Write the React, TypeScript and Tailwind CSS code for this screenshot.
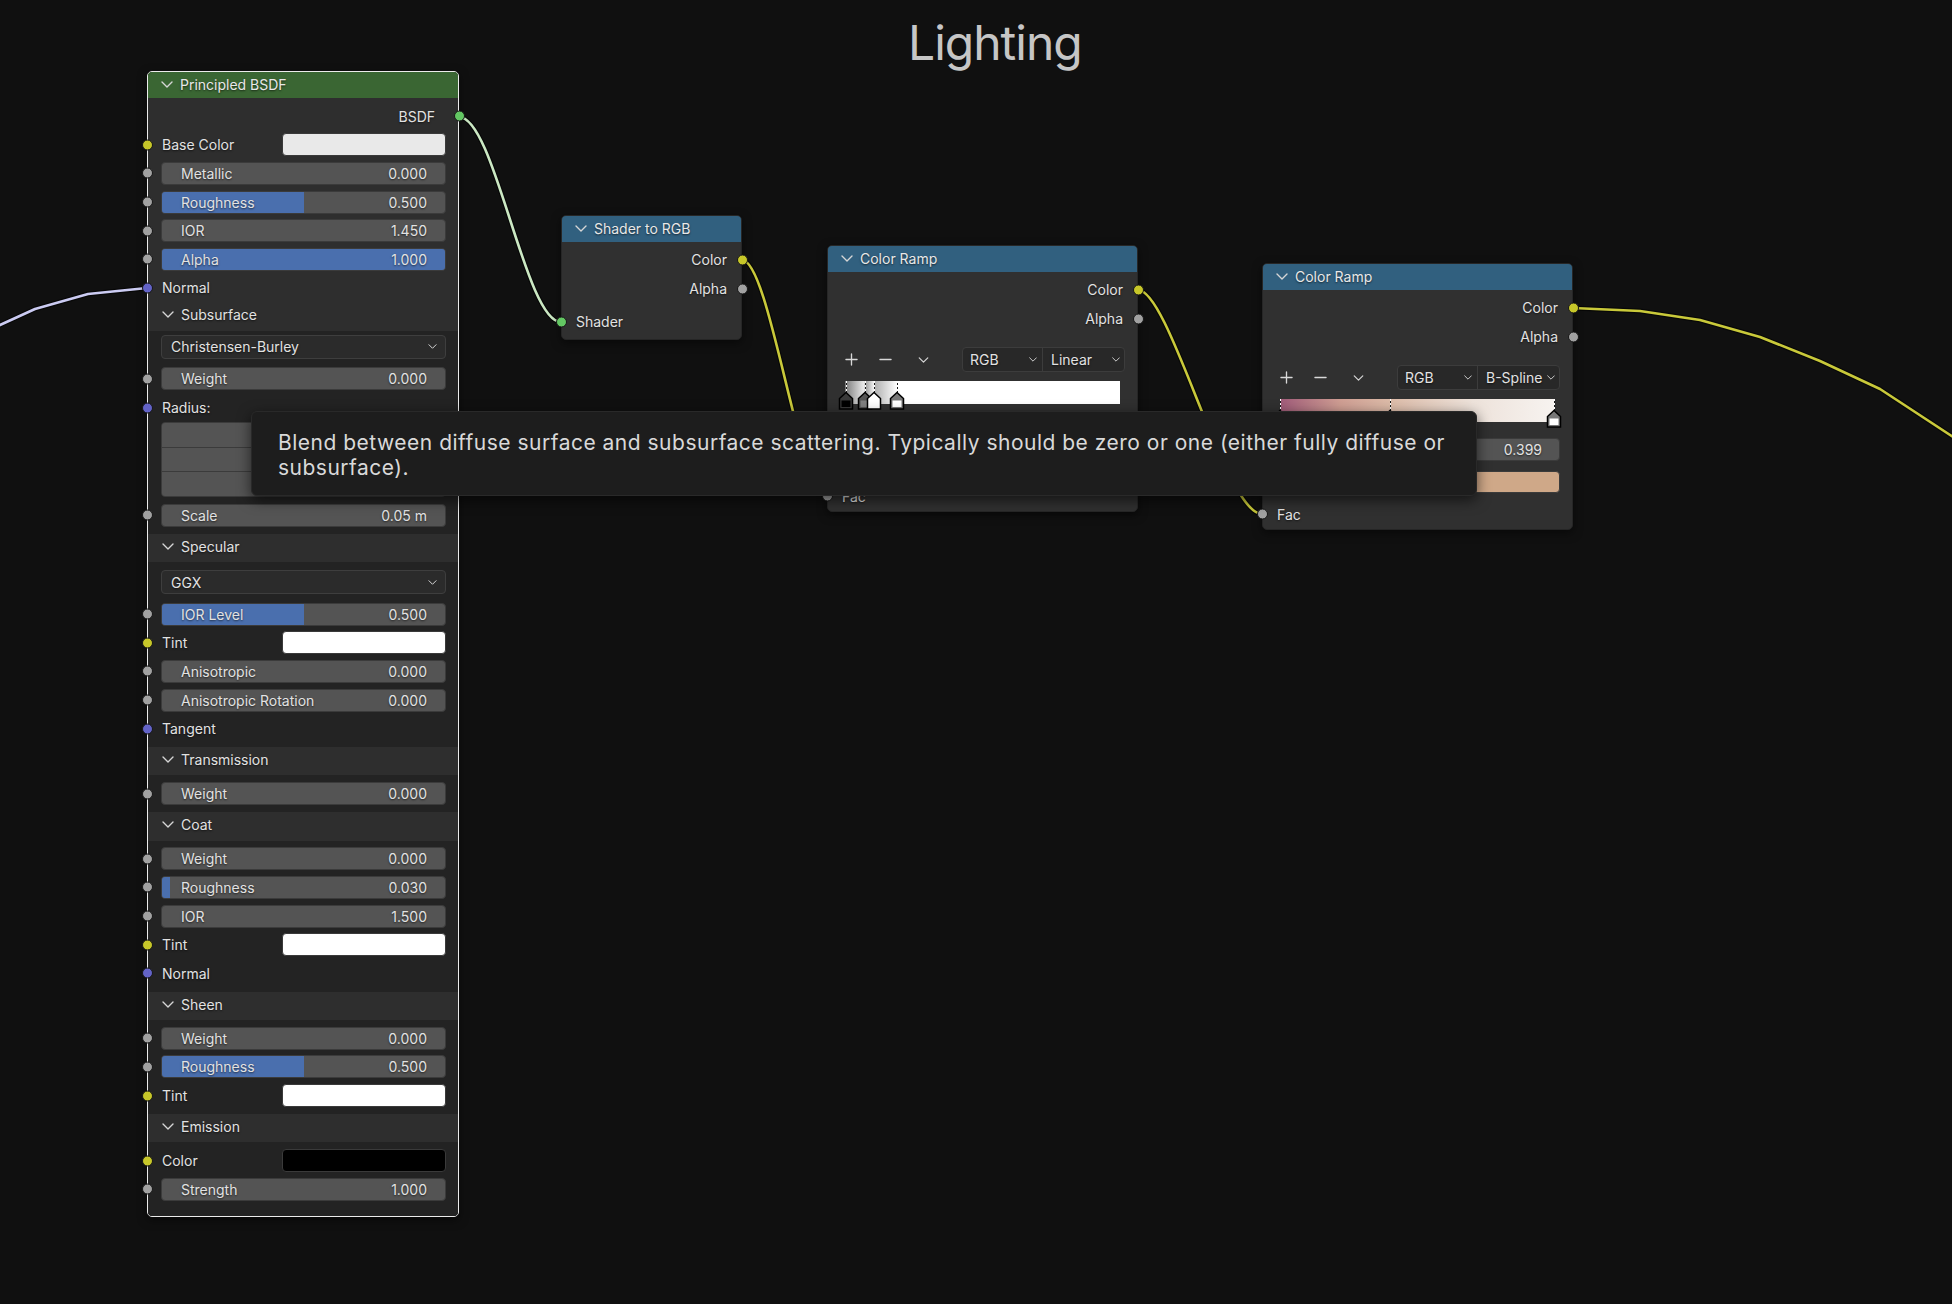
import React from 'react'
import { Plus, Minus } from 'lucide-react'

type Sock = 'yellow' | 'gray' | 'blue' | 'green'

const sockBg: Record<Sock, string> = {
  yellow: 'bg-[#c7c729]',
  gray: 'bg-[#a1a1a1]',
  blue: 'bg-[#6363c7]',
  green: 'bg-[#63c763]',
}

function Socket({ c, right }: { c: Sock; right?: boolean }) {
  return (
    <span
      className={`absolute top-1/2 -translate-y-1/2 size-[11px] rounded-full border border-[#161616] ${sockBg[c]} ${
        right ? '-right-[6.5px]' : '-left-[6.5px]'
      }`}
    />
  )
}

function Chevron({ w = 12, h = 7 }: { w?: number; h?: number }) {
  return (
    <svg width={w} height={h} viewBox="0 0 12 7" fill="none" className="shrink-0 stroke-[#d6d6d6]">
      <path d="M1 1l5 5 5-5" strokeWidth="1.4" strokeLinecap="round" strokeLinejoin="round" />
    </svg>
  )
}

function NodeHeader({ title, bg }: { title: string; bg: string }) {
  return (
    <div className={`flex items-center gap-[7px] h-[26px] pl-[13px] pb-[2px] rounded-t-[4px] text-[#e8e8e8] ${bg}`}>
      <Chevron />
      <span>{title}</span>
    </div>
  )
}

function Slider({ label, value, fill = 0 }: { label: string; value: string; fill?: number }) {
  return (
    <div className="relative flex items-center justify-between h-[23px] w-full overflow-hidden rounded-[4px] border border-[#3b3b3b] bg-[#545454] pl-[19px] pr-[18px]">
      {fill > 0 && <div className="absolute inset-y-0 left-0 bg-[#4a6fae]" style={{ width: `${fill * 100}%` }} />}
      <span className="relative">{label}</span>
      <span className="relative">{value}</span>
    </div>
  )
}

function OutRow({ label, c, pr = 'pr-[14px]', h = 'h-[29px]' }: { label: string; c: Sock; pr?: string; h?: string }) {
  return (
    <div className={`relative flex items-center justify-end ${h} ${pr}`}>
      <span>{label}</span>
      <Socket c={c} right />
    </div>
  )
}

function SliderRow({ label, value, fill = 0 }: { label: string; value: string; fill?: number }) {
  return (
    <div className="relative flex items-center h-[28.6px] pl-[13px] pr-[12px]">
      <Socket c="gray" />
      <Slider label={label} value={value} fill={fill} />
    </div>
  )
}

function ColorRow({ label, swatch }: { label: string; swatch: string }) {
  return (
    <div className="relative flex items-center justify-between h-[28.6px] pl-[14px] pr-[12px]">
      <Socket c="yellow" />
      <span>{label}</span>
      <div className={`h-[23px] w-[164px] rounded-[4px] border border-[#3a3a3a] ${swatch}`} />
    </div>
  )
}

function LabelRow({ label, c }: { label: string; c: Sock }) {
  return (
    <div className="relative flex items-center h-[28.6px] pl-[14px]">
      <Socket c={c} />
      <span>{label}</span>
    </div>
  )
}

function PanelHeader({ title }: { title: string }) {
  return (
    <div className="flex items-center gap-[7px] h-[28.5px] pl-[14px] pb-[3px] bg-[#2e2e2e]">
      <Chevron />
      <span>{title}</span>
    </div>
  )
}

function DropdownRow({ value }: { value: string }) {
  return (
    <div className="flex items-center h-[28px] pl-[13px] pr-[12px]">
      <div className="flex items-center justify-between h-[24px] w-full rounded-[4px] border border-[#3e3e3e] bg-[#2b2b2b] pl-[9px] pr-[8px]">
        <span>{value}</span>
        <Chevron w={9} h={5} />
      </div>
    </div>
  )
}

function PrincipledNode() {
  return (
    <div className="absolute left-[147px] top-[71px] w-[312px] rounded-[5px] border border-[#ececec] bg-[#2e2e2e] shadow-[0_3px_10px_rgba(0,0,0,0.5)]">
      <NodeHeader title="Principled BSDF" bg="bg-[#3a6633]" />
      <div className="pt-[4px]">
        <OutRow label="BSDF" c="green" pr="pr-[23px]" h="h-[28.6px]" />
        <ColorRow label="Base Color" swatch="bg-[#e9e9e9]" />
        <SliderRow label="Metallic" value="0.000" />
        <SliderRow label="Roughness" value="0.500" fill={0.5} />
        <SliderRow label="IOR" value="1.450" />
        <SliderRow label="Alpha" value="1.000" fill={1} />
        <LabelRow label="Normal" c="blue" />
      </div>

      <PanelHeader title="Subsurface" />
      <div className="bg-[#232323] pt-[2px] pb-[4px]">
        <DropdownRow value="Christensen-Burley" />
        <div className="mt-[4px]">
          <SliderRow label="Weight" value="0.000" />
        </div>
        <LabelRow label="Radius:" c="blue" />
        <div className="pl-[13px] pr-[12px]">
          <div className="flex flex-col gap-px overflow-hidden rounded-[4px] border border-[#3b3b3b] bg-[#3b3b3b]">
            <div className="h-[23.7px] bg-[#545454]" />
            <div className="h-[23.7px] bg-[#545454]" />
            <div className="h-[23.7px] bg-[#545454]" />
          </div>
        </div>
        <div className="mt-[4px]">
          <SliderRow label="Scale" value="0.05 m" />
        </div>
      </div>

      <PanelHeader title="Specular" />
      <div className="bg-[#232323] pt-[6px] pb-[4px]">
        <DropdownRow value="GGX" />
        <div className="mt-[4px]">
          <SliderRow label="IOR Level" value="0.500" fill={0.5} />
        </div>
        <ColorRow label="Tint" swatch="bg-white" />
        <SliderRow label="Anisotropic" value="0.000" />
        <SliderRow label="Anisotropic Rotation" value="0.000" />
        <LabelRow label="Tangent" c="blue" />
      </div>

      <PanelHeader title="Transmission" />
      <div className="bg-[#232323] pt-[4px] pb-[4px]">
        <SliderRow label="Weight" value="0.000" />
      </div>

      <PanelHeader title="Coat" />
      <div className="bg-[#232323] pt-[4px] pb-[4px]">
        <SliderRow label="Weight" value="0.000" />
        <SliderRow label="Roughness" value="0.030" fill={0.03} />
        <SliderRow label="IOR" value="1.500" />
        <ColorRow label="Tint" swatch="bg-white" />
        <LabelRow label="Normal" c="blue" />
      </div>

      <PanelHeader title="Sheen" />
      <div className="bg-[#232323] pt-[4px] pb-[4px]">
        <SliderRow label="Weight" value="0.000" />
        <SliderRow label="Roughness" value="0.500" fill={0.5} />
        <ColorRow label="Tint" swatch="bg-white" />
      </div>

      <PanelHeader title="Emission" />
      <div className="bg-[#232323] pt-[4px] pb-[12px] rounded-b-[4px]">
        <ColorRow label="Color" swatch="bg-black" />
        <SliderRow label="Strength" value="1.000" />
      </div>
    </div>
  )
}

function ShaderToRGB() {
  return (
    <div className="absolute left-[561px] top-[215px] w-[181px] rounded-[5px] border border-[#262626] bg-[#303030] shadow-[0_3px_10px_rgba(0,0,0,0.5)]">
      <NodeHeader title="Shader to RGB" bg="bg-[#31607f]" />
      <div className="pt-[3px] pb-[3px]">
        <OutRow label="Color" c="yellow" />
        <OutRow label="Alpha" c="gray" />
        <div className="relative mt-[4px] flex items-center h-[29px] pl-[14px]">
          <Socket c="green" />
          <span>Shader</span>
        </div>
      </div>
    </div>
  )
}

function Handle({ roof, body }: { roof: string; body: string }) {
  return (
    <svg width="16" height="19" viewBox="0 0 16 19">
      <path d="M1.5 18V7.5L8 1.5l6.5 6V18z" fill={roof} stroke="#000" strokeWidth="1.5" strokeLinejoin="miter" />
      <rect x="3.5" y="9.5" width="9" height="6.5" fill={body} />
    </svg>
  )
}

type Stop = { p: number; roof: string; body: string }

function ColorRamp({
  pos,
  interp,
  ramp,
  stops,
  dashes,
  posVal,
  swatch,
}: {
  pos: string
  interp: string
  ramp: string
  stops: Stop[]
  dashes: number[]
  posVal?: string
  swatch: string
}) {
  return (
    <div className={`absolute ${pos} w-[311px] rounded-[5px] border border-[#262626] bg-[#303030] shadow-[0_3px_10px_rgba(0,0,0,0.5)]`}>
      <NodeHeader title="Color Ramp" bg="bg-[#31607f]" />
      <div className="pt-[3px]">
        <OutRow label="Color" c="yellow" />
        <OutRow label="Alpha" c="gray" />
      </div>

      <div className="mt-[14px] flex items-center h-[25px] pl-[14px] pr-[12px] text-[#d8d8d8]">
        <Plus size={19} strokeWidth={1.7} />
        <Minus size={19} strokeWidth={1.7} className="ml-[15px]" />
        <span className="ml-[23px]">
          <Chevron w={11} h={6} />
        </span>
        <div className="ml-auto flex h-[25px] w-[163px] rounded-[4px] border border-[#3c3c3c] bg-[#282828] text-[#e2e2e2]">
          <div className="flex w-[80px] items-center justify-between border-r border-[#3c3c3c] pl-[7px] pr-[5px]">
            <span>RGB</span>
            <Chevron w={8} h={5} />
          </div>
          <div className="flex flex-1 items-center justify-between pl-[8px] pr-[4px]">
            <span>{interp}</span>
            <Chevron w={8} h={5} />
          </div>
        </div>
      </div>

      <div className="mt-[9px] px-[17px]">
        <div className={`relative h-[23px] ${ramp}`}>
          {dashes.map((d) => (
            <span
              key={d}
              className="absolute top-0 bottom-0 w-px bg-[repeating-linear-gradient(to_bottom,#ffffff_0_2px,#1a1a1a_2px_4px)]"
              style={{ left: `${d}%` }}
            />
          ))}
          {stops.map((s, i) => (
            <span key={i} className="absolute top-[10px] -translate-x-1/2" style={{ left: `${s.p}%` }}>
              <Handle roof={s.roof} body={s.body} />
            </span>
          ))}
        </div>
      </div>

      <div className="mt-[16px] flex gap-[4px] h-[23px] pl-[17px] pr-[12px]">
        <div className="w-[62px] rounded-[4px] border border-[#3b3b3b] bg-[#545454]" />
        <div className="flex flex-1 items-center justify-end rounded-[4px] border border-[#3b3b3b] bg-[#545454] pr-[17px]">
          {posVal && <span>{posVal}</span>}
        </div>
      </div>

      <div className="mt-[10px] h-[22px] pl-[17px] pr-[12px]">
        <div className={`h-full rounded-[4px] border border-[#3b3b3b] ${swatch}`} />
      </div>

      <div className="relative mt-[7px] flex items-center h-[28px] pl-[14px] mb-[1px]">
        <Socket c="gray" />
        <span>Fac</span>
      </div>
    </div>
  )
}

function Wire({ d, color }: { d: string; color: string }) {
  return (
    <>
      <path d={d} fill="none" stroke="rgba(0,0,0,0.55)" strokeWidth="5" strokeLinecap="round" strokeLinejoin="round" />
      <path d={d} fill="none" stroke={color} strokeWidth="2.6" strokeLinecap="round" strokeLinejoin="round" />
    </>
  )
}

function Wires() {
  return (
    <svg className="absolute inset-0" width="1952" height="1304" viewBox="0 0 1952 1304">
      <Wire d="M -40 345 L 0 325 L 35 309 L 88 294 L 147 288" color="#cbcbf2" />
      <Wire d="M 459 117 C 495 117, 525 322, 561 322" color="#cbe8c3" />
      <Wire d="M 742 260 C 770 260, 800 497, 827 497" color="#c9c93a" />
      <Wire d="M 1138 290 C 1170 290, 1225 514, 1262 514" color="#c9c93a" />
      <Wire d="M 1573 308 L 1640 311 L 1700 320 L 1760 337 L 1820 361 L 1880 389 L 1970 448" color="#c9c93a" />
    </svg>
  )
}

function Tooltip() {
  return (
    <div className="absolute left-[251px] top-[411px] w-[1226px] h-[85px] rounded-[6px] border border-[#292929] bg-[#1d1d1d] pl-[26px] pt-[18px] text-[21px] leading-[25px] tracking-[0.5px] text-[#d9d9d9] shadow-[0_4px_14px_rgba(0,0,0,0.6)] [text-shadow:none]">
      <div className="whitespace-nowrap">
        Blend between diffuse surface and subsurface scattering. Typically should be zero or one (either fully diffuse or
      </div>
      <div className="whitespace-nowrap">subsurface).</div>
    </div>
  )
}

export default function App() {
  return (
    <div className="relative w-[1952px] h-[1304px] overflow-hidden bg-[#101010] font-['Inter','Liberation_Sans',sans-serif] text-[14px] text-[#e2e2e2] [text-shadow:0_1px_2px_rgba(0,0,0,0.6)]">
      <Wires />
      <div className="absolute left-[908px] top-[19px] text-[48px] leading-[48px] tracking-[-1px] text-[#c6c6c6] [text-shadow:none]">
        Lighting
      </div>
      <PrincipledNode />
      <ShaderToRGB />
      <ColorRamp
        pos="left-[827px] top-[245px]"
        interp="Linear"
        ramp="bg-[linear-gradient(to_right,#7a7a7a_0%,#ececec_7%,#9a9a9a_7.4%,#f4f4f4_10.5%,#b0b0b0_10.8%,#ffffff_19%,#ffffff_100%)]"
        dashes={[0.4, 7.3, 10.5, 19]}
        stops={[
          { p: 0.4, roof: '#3a3a3a', body: '#000000' },
          { p: 7.3, roof: '#555555', body: '#808080' },
          { p: 19, roof: '#777777', body: '#ffffff' },
          { p: 10.5, roof: '#ffffff', body: '#ffffff' },
        ]}
        swatch="bg-black"
      />
      <ColorRamp
        pos="left-[1262px] top-[263px]"
        interp="B-Spline"
        ramp="bg-[linear-gradient(to_right,#a05b79_0%,#cf9e93_22%,#dcbba8_40%,#ede2da_70%,#f7f3f0_100%)]"
        dashes={[0, 40, 99.6]}
        stops={[
          { p: 0, roof: '#555555', body: '#a05b79' },
          { p: 40, roof: '#555555', body: '#cfa888' },
          { p: 99.6, roof: '#777777', body: '#ffffff' },
        ]}
        posVal="0.399"
        swatch="bg-[#cfa888]"
      />
      <Tooltip />
    </div>
  )
}
